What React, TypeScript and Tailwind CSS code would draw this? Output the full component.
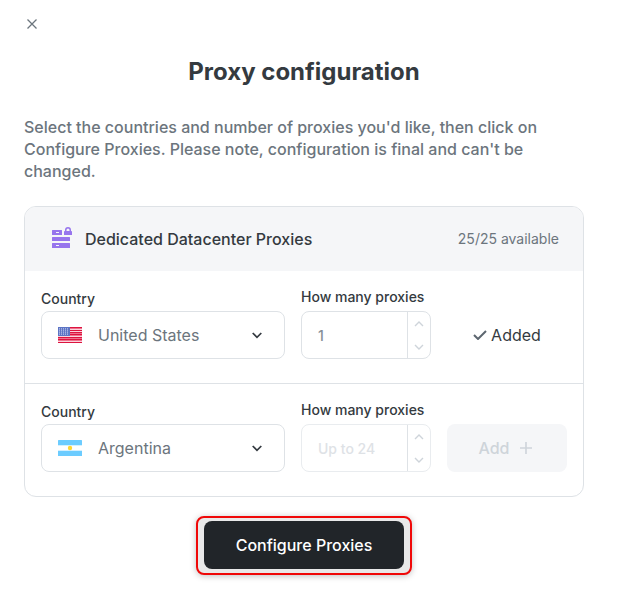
import React, { useState } from 'react';

type RowProps = {
    id: string;
    initialCountry: string;
    initialAmount: string;
    added?: boolean;
};

const UsFlag = () => (
    <svg width="24" height="16" viewBox="0 0 24 16" aria-hidden="true" shapeRendering="crispEdges">
        <rect width="24" height="16" fill="#fbd3dc" />
        {[0, 3, 5, 7, 10, 12, 15].map((y) => (
            <rect key={y} y={y} width="24" height="1" fill="#dc1440" />
        ))}
        {[1, 6, 8, 11, 13].map((y) => (
            <rect key={y} y={y} width="24" height="1" fill="#f0708c" />
        ))}
        <rect width="12" height="9" fill="#5c74c4" />
        {[1, 3, 5, 7].map((y) => (
            <path key={y} d={`M1 ${y + 0.5}h10`} stroke="#a3b1e2" strokeDasharray="1 1" />
        ))}
        {[2, 4, 6].map((y) => (
            <path key={y} d={`M1 ${y + 0.5}h10`} stroke="#8c9dd6" strokeDasharray="1 1" />
        ))}
    </svg>
);

const ArgentinaFlag = () => (
    <svg width="24" height="16" viewBox="0 0 24 16" aria-hidden="true">
        <rect width="24" height="16" rx="0.5" fill="#6cccff" />
        <rect y="5.3" width="24" height="5.4" fill="#fff" />
        <circle cx="12" cy="8" r="2.2" fill="#ffd633" />
    </svg>
);

const ServerIcon = () => (
    <svg width="22" height="24" viewBox="0 1 22 24" fill="#9775ed" aria-hidden="true">
        <path fillRule="evenodd" d="M1.500 4h9q.5 0 .5.5v4q0 .5-.5.5h-9q-.5 0-.5-.5v-4q0-.5.5-.5ZM5 6v1h3V6Z" />
        <path d="M1.500 11h17q.5 0 .5.5v3q0 .5-.5.5h-17q-.5 0-.5-.5v-3q0-.5.5-.5Z" />
        <path fillRule="evenodd" d="M1.500 17h17q.5 0 .5.5v4q0 .5-.5.5h-17q-.5 0-.5-.5v-4q0-.5.5-.5ZM5 19v1h3v-1Z" />
        <path fillRule="evenodd" d="M13 5.500q0-.5 1-.5V4a3 3 0 0 1 6 0v1q1 0 1 .5v3q0 .5-.5.5h-7q-.5 0-.5-.5ZM15.500 5h3V4a1.500 1.500 0 0 0-3 0Z" />
    </svg>
);

const Chevron = ({ up = false }: { up?: boolean }) => (
    <svg width="10" height="6" viewBox="0 0 10 6" fill="none" stroke="currentColor" strokeWidth="1.4" aria-hidden="true">
        <path d={up ? 'M1 5l4-4 4 4' : 'M1 1l4 4 4-4'} />
    </svg>
);

const ProxyRow = ({ id, initialCountry, initialAmount, added = false }: RowProps) => {
    const [country, setCountry] = useState(initialCountry);
    const [amount, setAmount] = useState(initialAmount);

    const step = (delta: number) => {
        const next = Math.min(24, Math.max(1, Number(amount) + delta));
        setAmount(next.toString());
    };

    return (
        <div className="flex items-end gap-4 px-4 pt-4 pb-6">
            {/* Country */}
            <div className="min-w-0 flex-1">
                <label htmlFor={`${id}-country`} className="block text-sm leading-6 font-medium">
                    Country
                </label>
                <div className="relative">
                    <span className="pointer-events-none absolute top-4 left-[17px]">
                        {country === 'Argentina' ? <ArgentinaFlag /> : <UsFlag />}
                    </span>
                    <select
                        id={`${id}-country`}
                        value={country}
                        onChange={(e) => setCountry(e.target.value)}
                        className="block h-12 w-full appearance-none rounded-lg border border-[#dee2e6] bg-white pr-10 pl-14 text-base text-[#6c757d]"
                    >
                        <option>United States</option>
                        <option>Argentina</option>
                    </select>
                    <svg
                        className="pointer-events-none absolute top-[21px] right-[23px]"
                        width="10"
                        height="7"
                        viewBox="0 0 10 7"
                        fill="none"
                        stroke="#343a40"
                        strokeWidth="1.7"
                        aria-hidden="true"
                    >
                        <path d="M.7 1L5 5.300 9.300 1" />
                    </svg>
                </div>
            </div>

            {/* Amount */}
            <div className="w-[130px]">
                <label htmlFor={`${id}-amount`} className="mb-1 block text-sm leading-5 font-medium whitespace-nowrap">
                    How many proxies
                </label>
                <div className={`flex h-12 overflow-hidden rounded-lg border ${added ? 'border-[#dee2e6]' : 'border-[#e9ecef]'}`}>
                    <input
                        id={`${id}-amount`}
                        type="text"
                        inputMode="numeric"
                        value={amount}
                        onChange={(e) => setAmount(e.target.value)}
                        placeholder="Up to 24"
                        className="min-w-0 flex-1 pt-0.5 pl-4 text-sm font-medium text-[#868e96] outline-none placeholder:text-[#dee2e6]"
                    />
                    <div className="flex w-[23px] flex-col border-l border-[#dee2e6] text-[#ced4da]">
                        <button type="button" aria-label="Increase" onClick={() => step(1)} className="flex flex-1 items-center justify-center">
                            <Chevron up />
                        </button>
                        <button type="button" aria-label="Decrease" onClick={() => step(-1)} className="flex flex-1 items-center justify-center">
                            <Chevron />
                        </button>
                    </div>
                </div>
            </div>

            {/* Status / action */}
            {added ? (
                <div className="flex h-12 w-[120px] items-center justify-center gap-1 text-base">
                    <svg width="14" height="10" viewBox="0 0 14 10" fill="none" stroke="#5c666f" strokeWidth="2" aria-hidden="true">
                        <path d="M1 5l4 4 8-8" />
                    </svg>
                    Added
                </div>
            ) : (
                <button
                    type="button"
                    disabled
                    className="flex h-12 w-[120px] items-center justify-center gap-2.5 rounded-lg bg-[#f5f6f8] pr-1 text-base font-medium text-[#ced4da]"
                >
                    Add
                    <svg width="12" height="12" viewBox="0 0 12 12" fill="none" stroke="currentColor" strokeWidth="1.6" aria-hidden="true">
                        <path d="M6 0v12M0 6h12" />
                    </svg>
                </button>
            )}
        </div>
    );
};

const App = () => {
    return (
        <main className="bg-white pt-3 pr-[33px] pb-4 pl-6 font-[Inter,sans-serif] text-[#343a40]">
            <button type="button" aria-label="Close" className="flex h-6 w-4 items-center justify-center">
                <svg width="10" height="10" viewBox="0 0 10 10" fill="none" stroke="#6c757d" strokeWidth="1.3" aria-hidden="true">
                    <path d="M.5.5l9 9M9.500.5l-9 9" />
                </svg>
            </button>

            <h1 className="mt-5 text-center text-2xl leading-8 font-bold">Proxy configuration</h1>

            <p className="mt-7 text-base leading-[22px] font-medium text-[#6c757d]">
                Select the countries and number of proxies you'd like, then click on Configure Proxies. Please note,
                configuration is final and can't be changed.
            </p>

            {/* Proxy card */}
            <section className="mt-6 overflow-hidden rounded-xl border border-[#dee2e6]">
                <div className="flex h-16 items-center bg-[#f5f6f8] pr-6 pl-[26px]">
                    <ServerIcon />
                    <h2 className="ml-3 text-base font-medium">Dedicated Datacenter Proxies</h2>
                    <span className="ml-auto text-sm text-[#6c757d]">25/25 available</span>
                </div>
                <div className="divide-y divide-[#dee2e6]">
                    <ProxyRow id="first" initialCountry="United States" initialAmount="1" added />
                    <ProxyRow id="second" initialCountry="Argentina" initialAmount="" />
                </div>
            </section>

            {/* Submit */}
            <div className="mt-[19px] flex justify-center">
                <div className="rounded-lg border-2 border-[#f00808] bg-[#e9e9e9] px-[6px] pt-[3px] pb-1 shadow-[0_1px_6px_rgba(0,0,0,0.25)]">
                    <button type="button" className="h-12 w-[200px] rounded-lg bg-[#212529] text-base font-medium text-white">
                        Configure Proxies
                    </button>
                </div>
            </div>
        </main>
    );
};

export default App;
